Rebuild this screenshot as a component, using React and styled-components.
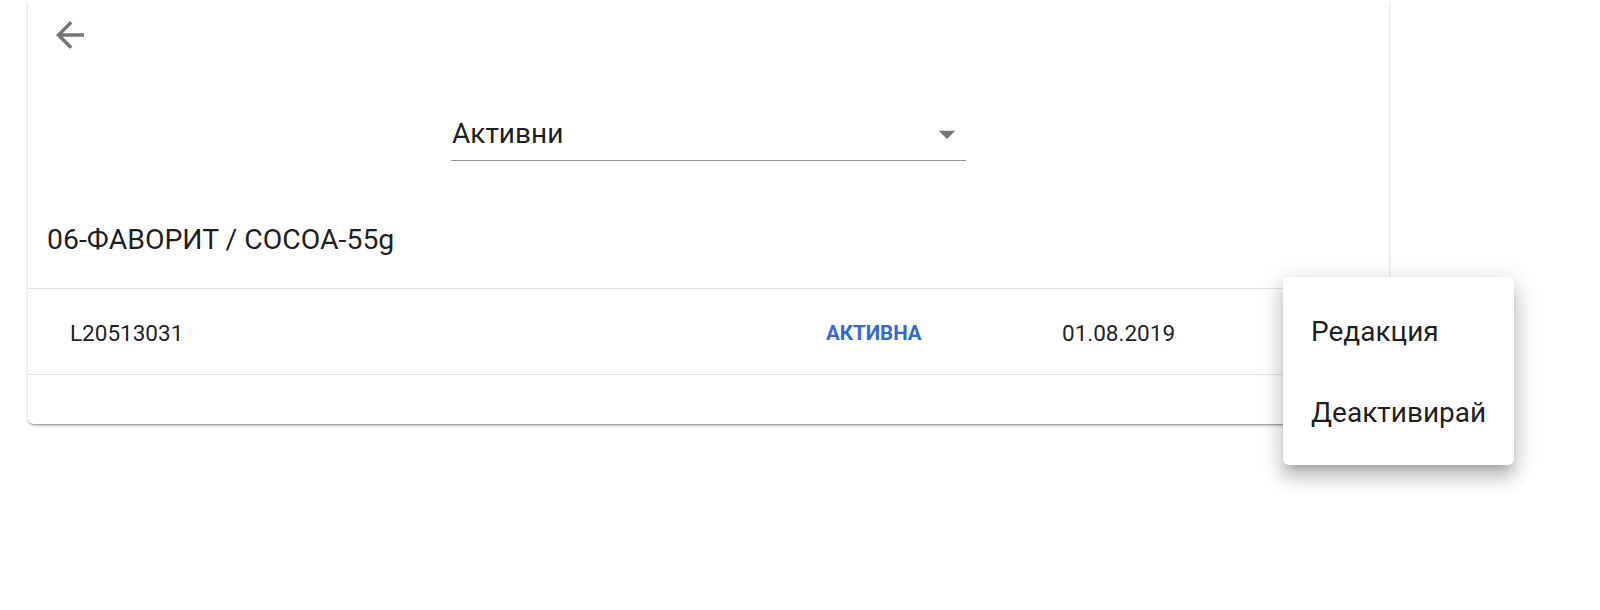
import React from 'react';
import styled, { createGlobalStyle } from 'styled-components';

const GlobalStyle = createGlobalStyle`
  body {
    margin: 0;
    background: #ffffff;
    font-family: Roboto, "Noto Sans", "Liberation Sans", sans-serif;
    color: rgba(0, 0, 0, 0.9);
  }
`;

const Page = styled.div`
  position: relative;
  width: 1600px;
  height: 610px;
  overflow: hidden;
  padding-left: 28px;
  box-sizing: border-box;
`;

const Card = styled.div`
  width: 1361px;
  background: #fff;
  border-radius: 0 0 6px 6px;
  box-shadow: 0 2px 3px rgba(0, 0, 0, 0.2), 0 1px 1px rgba(0, 0, 0, 0.14),
    0 3px 1px -2px rgba(0, 0, 0, 0.12);
  padding-bottom: 49px;
`;

const Header = styled.div`
  display: flex;
  padding: 14px 0 0 21px;
`;

const IconButton = styled.button`
  display: flex;
  border: none;
  background: none;
  padding: 0;
  cursor: pointer;
  color: #757575;
`;

const SelectBox = styled.div`
  display: flex;
  align-items: center;
  justify-content: space-between;
  width: 515px;
  margin: 61px auto 0;
  padding-bottom: 9px;
  border-bottom: 1px solid rgba(0, 0, 0, 0.42);
  height: 34px;
`;

const SelectValue = styled.span`
  font-size: 28px;
  line-height: 34px;
  padding-left: 1px;
`;

const DropIcon = styled.svg`
  width: 40px;
  height: 40px;
  fill: #757575;
  margin-right: -1px;
`;

const Title = styled.h2`
  margin: 0;
  font-weight: 400;
  font-size: 28.4px;
  line-height: 34px;
  padding: 62px 19px 31px;
  border-bottom: 1px solid #e0e0e0;
`;

const Row = styled.div`
  display: grid;
  grid-template-columns: 756px 236px 1fr;
  align-items: center;
  height: 86px;
  padding: 3px 0 0 42px;
  box-sizing: border-box;
  border-bottom: 1px solid #e0e0e0;
  font-size: 22.5px;
`;

const Cell = styled.span`
  color: ${(p) => (p.$status ? '#3367d6' : 'inherit')};
  font-weight: ${(p) => (p.$status ? 700 : 400)};
  font-size: ${(p) => (p.$status ? '20.5px' : 'inherit')};
  text-transform: ${(p) => (p.$status ? 'uppercase' : 'none')};
`;

const Menu = styled.ul`
  position: absolute;
  left: 1283px;
  top: 277px;
  width: 231px;
  margin: 0;
  padding: 14px 0 12px;
  list-style: none;
  background: #fff;
  border-radius: 6px;
  box-shadow: 0 8px 8px -5px rgba(0, 0, 0, 0.2), 0 13px 17px 2px rgba(0, 0, 0, 0.14),
    0 5px 23px 4px rgba(0, 0, 0, 0.12);
`;

const MenuItem = styled.li`
  display: flex;
  align-items: center;
  height: 81px;
  padding-left: 28px;
  font-size: 28px;
  cursor: pointer;
`;

const App = () => (
  <>
    <GlobalStyle />
    <Page>
      <Card>
        <Header>
          <IconButton aria-label="back">
            <svg width="42" height="42" viewBox="0 0 24 24" fill="currentColor">
              <path d="M20 11H7.83l5.59-5.59L12 4l-8 8 8 8 1.41-1.41L7.83 13H20v-2z" />
            </svg>
          </IconButton>
        </Header>
        <SelectBox>
          <SelectValue>Активни</SelectValue>
          <DropIcon viewBox="0 0 24 24">
            <path d="M7 10l5 5 5-5z" />
          </DropIcon>
        </SelectBox>
        <Title>06-ФАВОРИТ / COCOA-55g</Title>
        <Row>
          <Cell>L20513031</Cell>
          <Cell $status>Активна</Cell>
          <Cell>01.08.2019</Cell>
        </Row>
      </Card>
      <Menu>
        <MenuItem>Редакция</MenuItem>
        <MenuItem>Деактивирай</MenuItem>
      </Menu>
    </Page>
  </>
);

export default App;
